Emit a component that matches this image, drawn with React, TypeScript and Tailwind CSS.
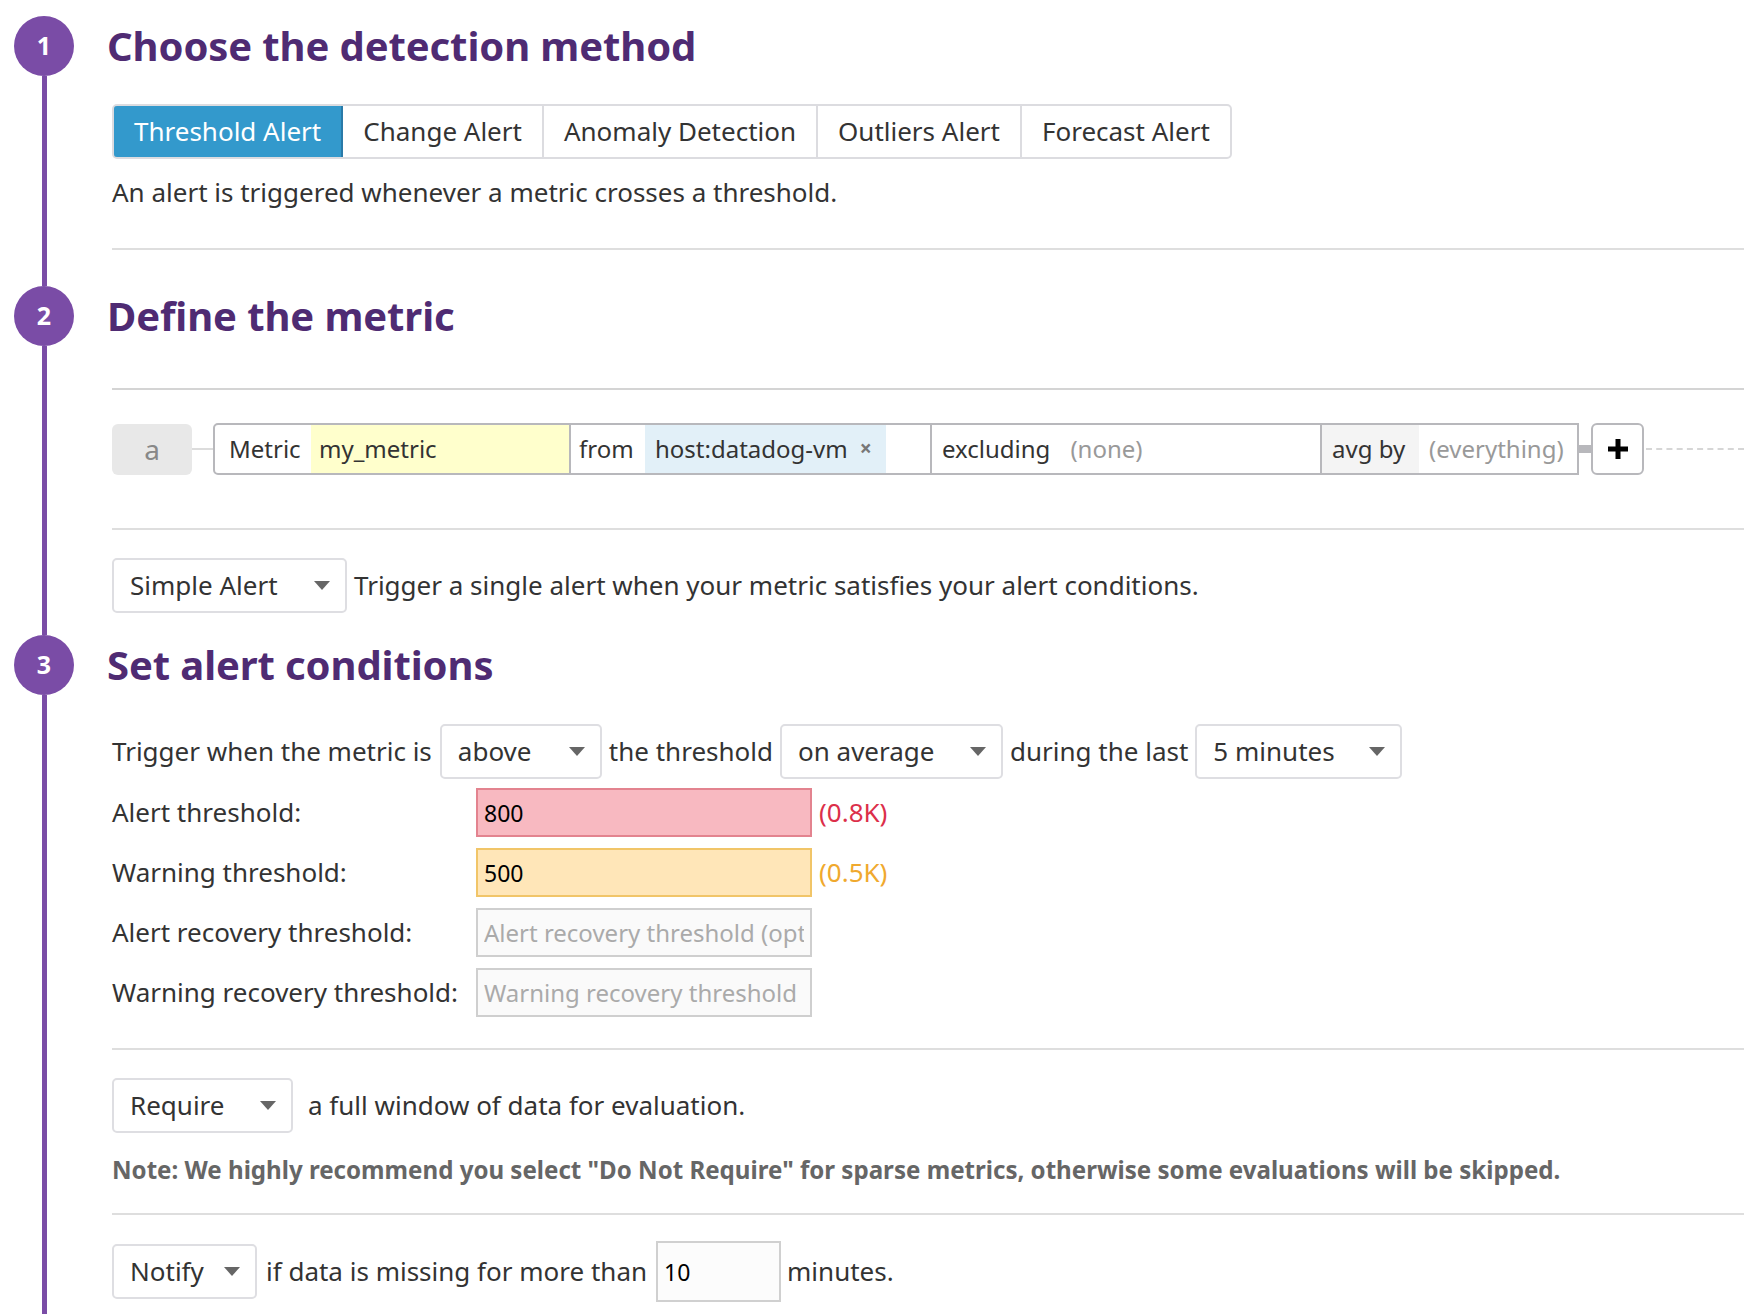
import React from "react";

const TABS = ["Threshold Alert", "Change Alert", "Anomaly Detection", "Outliers Alert", "Forecast Alert"];

function Caret() {
  return (
    <svg width="16" height="9" viewBox="0 0 16 9" className="shrink-0">
      <path d="M0 0 L16 0 L8 9 Z" fill="#666" />
    </svg>
  );
}

function Select({ label, width }: { label: string; width: string }) {
  return (
    <div
      className={`${width} h-[55px] shrink-0 flex items-center justify-between pl-[16px] pr-[15px] bg-white border-2 border-[#dedee2] rounded-[5px] text-[26px] text-[#333]`}
    >
      <span>{label}</span>
      <Caret />
    </div>
  );
}

function Step({ n }: { n: number }) {
  return (
    <div className="w-[60px] h-[60px] shrink-0 rounded-full bg-[#7a4ca6] text-white font-bold text-[25px] flex items-center justify-center">
      {n}
    </div>
  );
}

function Section({
  n,
  title,
  top,
  first,
  grow,
  children,
}: {
  n: number;
  title: string;
  top: string;
  first?: boolean;
  grow?: boolean;
  children: React.ReactNode;
}) {
  return (
    <div className={`flex ${grow ? "flex-1" : ""}`}>
      <div className="w-[88px] shrink-0 flex flex-col items-center">
        <div className={`${top} w-[5px] ${first ? "" : "bg-[#7a4ca6]"}`} />
        <Step n={n} />
        <div className="flex-1 w-[5px] bg-[#7a4ca6]" />
      </div>
      <div className="flex-1 min-w-0">
        <div className={`${top}`} />
        <h2 className="h-[60px] flex items-center pl-[19px] text-[40px] font-bold text-[#4f2b73] tracking-[-0.1px]">
          {title}
        </h2>
        <div className="pl-[24px]">{children}</div>
      </div>
    </div>
  );
}

function Threshold({
  label,
  value,
  placeholder,
  tone,
  hint,
}: {
  label: string;
  value?: string;
  placeholder?: string;
  tone: "red" | "yellow" | "plain";
  hint?: string;
}) {
  const box =
    tone === "red"
      ? "bg-[#f8b9c1] border-[#e3838f] text-black"
      : tone === "yellow"
      ? "bg-[#ffe6b8] border-[#f1c568] text-black"
      : "bg-[#fafafa] border-[#cfcfcf] text-black";
  return (
    <div className="flex items-center h-[49px]">
      <div className="w-[364px] shrink-0 text-[26px] text-[#333]">{label}</div>
      <input
        readOnly
        value={value ?? ""}
        placeholder={placeholder}
        className={`w-[336px] h-[49px] border-2 px-[6px] text-[23px] outline-none placeholder:text-[#aaa] placeholder:text-[24px] ${box}`}
      />
      {hint && (
        <span
          className={`ml-[7px] text-[26px] ${tone === "red" ? "text-[#dc2f4a]" : "text-[#f0a92e]"}`}
        >
          {hint}
        </span>
      )}
    </div>
  );
}

export default function App() {
  return (
    <div
      className="w-[1744px] h-[1314px] overflow-hidden bg-white text-[#333] flex flex-col"
      style={{ fontFamily: '"Noto Sans", "Open Sans", sans-serif' }}
    >
      <Section n={1} title="Choose the detection method" top="h-[16px]" first>
        <div className="mt-[28px] flex">
          <div className="flex h-[55px] border-2 border-[#dcdce0] rounded-[5px] overflow-hidden">
            {TABS.map((t, i) => (
              <div
                key={t}
                className={
                  i === 0
                    ? "px-[20px] flex items-center bg-[#3399cc] text-white text-[26px] -m-[2px] mr-0 rounded-l-[5px] border-2 border-[#2a7aa8]"
                    : "px-[20px] flex items-center text-[26px] text-[#333] border-r-2 border-[#dcdce0] last:border-r-0"
                }
              >
                {t}
              </div>
            ))}
          </div>
        </div>
        <p className="mt-[15px] text-[26px] leading-[36px]">
          An alert is triggered whenever a metric crosses a threshold.
        </p>
        <div className="mt-[38px] h-[2px] bg-[#dedede]" />
      </Section>

      <Section n={2} title="Define the metric" top="h-[36px]">
        <div className="mt-[42px] h-[2px] bg-[#d4d4d4]" />
        <div className="mt-[33px] flex items-center h-[52px]">
          <div className="w-[80px] h-[51px] rounded-[6px] bg-[#e8e8e8] flex items-center justify-center text-[28px] text-[#888]">
            a
          </div>
          <div className="w-[21px] h-[2px] bg-[#dcdcdc]" />
          <div className="flex h-[52px] w-[1366px] border-2 border-[#b8b8bc] rounded-l-[5px] text-[24px] overflow-hidden">
            <div className="w-[96px] pl-[14px] flex items-center text-[#333]">Metric</div>
            <div className="w-[258px] pl-[8px] flex items-center bg-[#ffffcc] text-[#333]">my_metric</div>
            <div className="w-[2px] bg-[#b8b8bc]" />
            <div className="w-[74px] pl-[8px] flex items-center">from</div>
            <div className="w-[241px] pl-[10px] flex items-center bg-[#e2f0f8]">
              host:datadog-vm
              <span className="ml-[12px] text-[21px] text-[#777] font-bold">×</span>
            </div>
            <div className="w-[44px]" />
            <div className="w-[2px] bg-[#b8b8bc]" />
            <div className="w-[388px] pl-[10px] flex items-center">
              excluding
              <span className="ml-[20px] text-[#999]">(none)</span>
            </div>
            <div className="w-[2px] bg-[#b8b8bc]" />
            <div className="w-[97px] pl-[10px] flex items-center bg-[#f4f4f4]">avg by</div>
            <div className="flex-1 pl-[10px] flex items-center text-[#999]">(everything)</div>
          </div>
          <div className="w-[12px] h-[8px] bg-[#b8b8bc]" />
          <div className="w-[53px] h-[52px] border-2 border-[#b8b8bc] rounded-[6px] flex items-center justify-center bg-white">
            <svg width="22" height="22" viewBox="0 0 22 22">
              <path d="M11 1 V21 M1 11 H21" stroke="#000" strokeWidth="5" />
            </svg>
          </div>
          <div className="flex-1 ml-[2px] border-t-2 border-dashed border-[#d6d6d6]" />
        </div>
        <div className="mt-[53px] h-[2px] bg-[#dedede]" />
        <div className="mt-[28px] flex items-center gap-[7px] text-[26px]">
          <Select label="Simple Alert" width="w-[235px]" />
          <span>Trigger a single alert when your metric satisfies your alert conditions.</span>
        </div>
      </Section>

      <Section n={3} title="Set alert conditions" top="h-[22px]" grow>
        <div className="mt-[29px] flex items-center gap-[7px] text-[26px] whitespace-nowrap">
          <span className="mr-[1px]">Trigger when the metric is</span>
          <Select label="above" width="w-[162px]" />
          <span>the threshold</span>
          <Select label="on average" width="w-[223px]" />
          <span>during the last</span>
          <Select label="5 minutes" width="w-[207px]" />
        </div>
        <div className="mt-[9px] flex flex-col gap-[11px]">
          <Threshold label="Alert threshold:" value="800" tone="red" hint="(0.8K)" />
          <Threshold label="Warning threshold:" value="500" tone="yellow" hint="(0.5K)" />
          <Threshold label="Alert recovery threshold:" placeholder="Alert recovery threshold (optional)" tone="plain" />
          <Threshold label="Warning recovery threshold:" placeholder="Warning recovery threshold" tone="plain" />
        </div>
        <div className="mt-[31px] h-[2px] bg-[#dedede]" />
        <div className="mt-[28px] flex items-center gap-[15px] text-[26px]">
          <Select label="Require" width="w-[181px]" />
          <span>a full window of data for evaluation.</span>
        </div>
        <p className="mt-[21px] text-[24.1px] leading-[32px] font-bold text-[#666]">
          Note: We highly recommend you select "Do Not Require" for sparse metrics, otherwise some evaluations will be skipped.
        </p>
        <div className="mt-[27px] h-[2px] bg-[#dedede]" />
        <div className="mt-[26px] flex items-center text-[26px] h-[61px]">
          <Select label="Notify" width="w-[145px]" />
          <span className="ml-[9px]">if data is missing for more than</span>
          <input
            readOnly
            value="10"
            className="ml-[9px] w-[125px] h-[61px] border-2 border-[#d0d0d0] bg-[#fcfcfc] px-[6px] text-[23px] text-black outline-none"
          />
          <span className="ml-[6px]">minutes.</span>
        </div>
      </Section>
    </div>
  );
}
